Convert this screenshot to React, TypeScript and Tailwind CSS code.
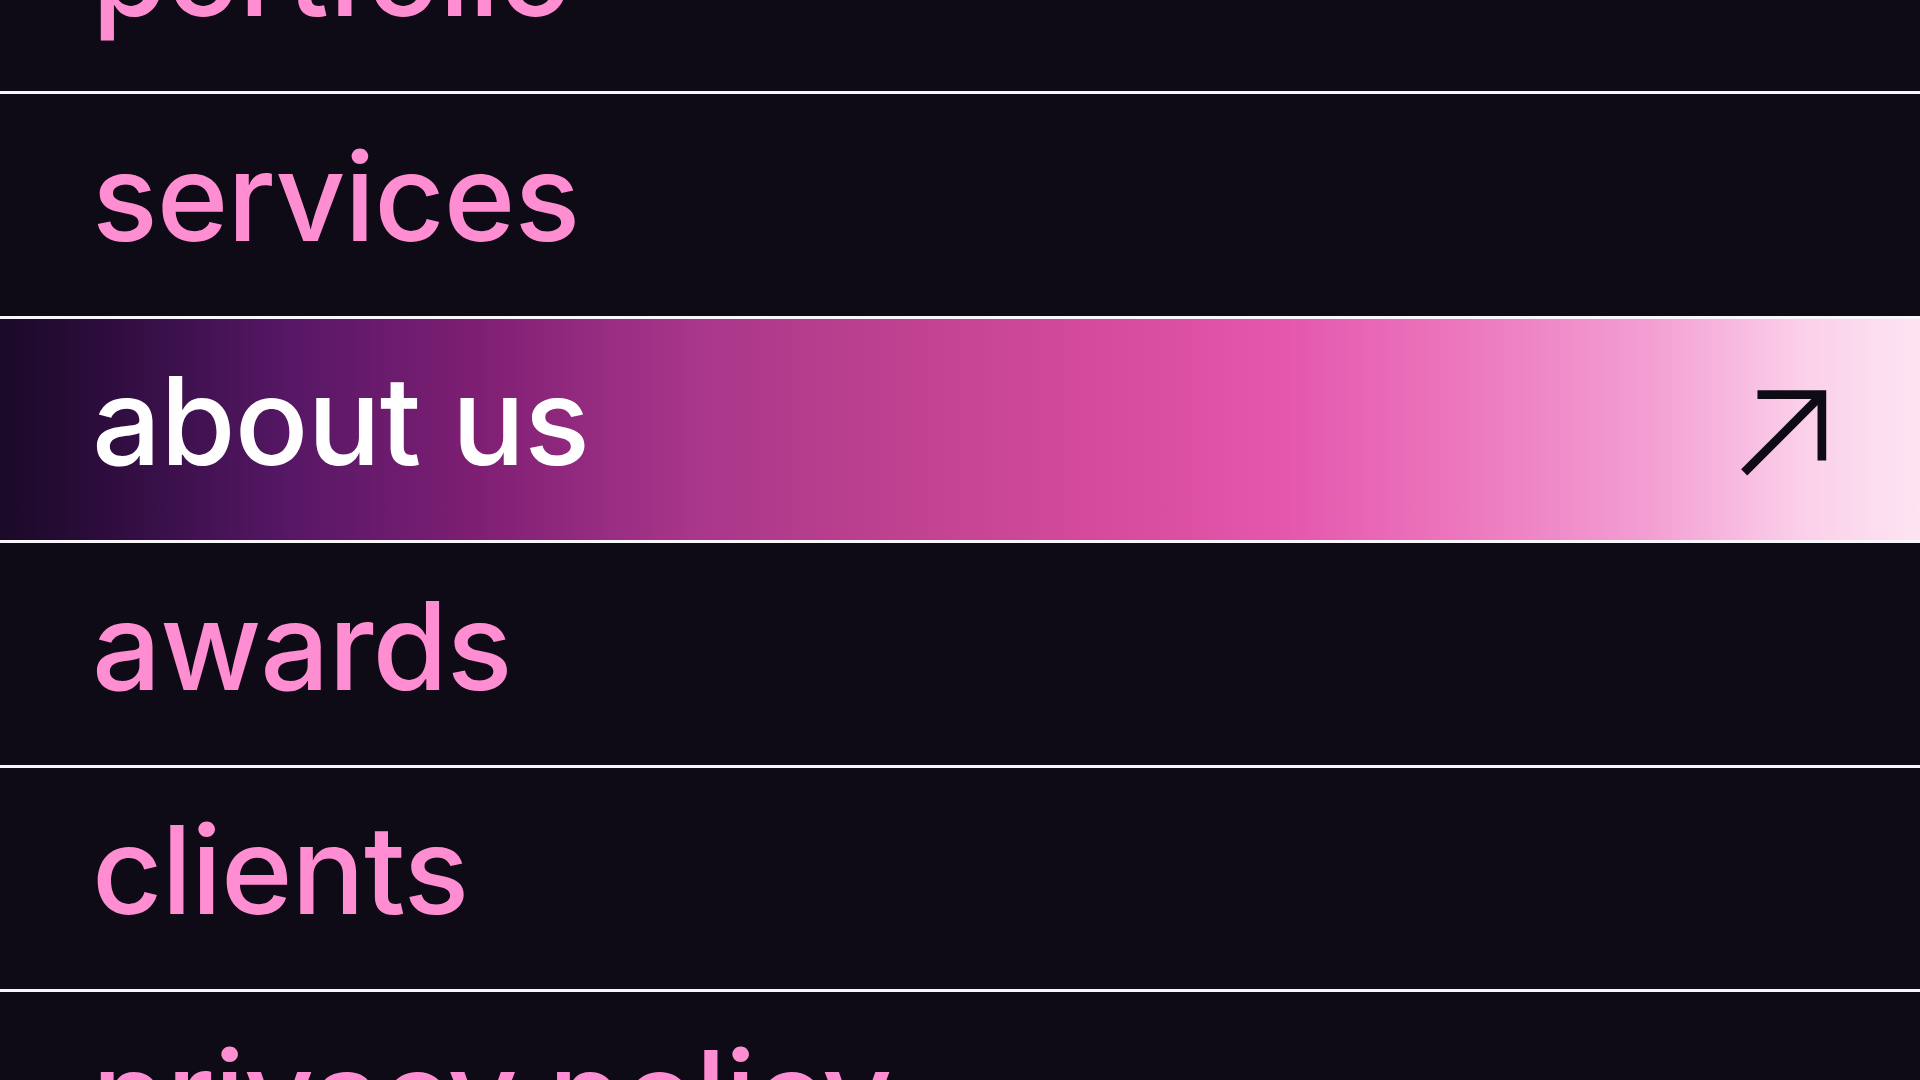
import React from 'react';

const items = [
  { id: 'portfolio', label: 'portfolio' },
  { id: 'services', label: 'services' },
  { id: 'about', label: 'about us', active: true },
  { id: 'awards', label: 'awards' },
  { id: 'clients', label: 'clients' },
  { id: 'privacy', label: 'privacy policy' },
];

function ArrowUpRight() {
  return (
    <svg width="92" height="92" viewBox="0 0 90 90" fill="none" className="mt-6 flex-shrink-0">
      <path d="M21 7.5H84V72" stroke="#0e0b16" strokeWidth="8.5" strokeLinejoin="miter" />
      <path d="M84 7.5L8 83.5" stroke="#0e0b16" strokeWidth="8.5" />
    </svg>
  );
}

export default function App() {
  return (
    <div className="h-screen w-full overflow-hidden bg-[#0e0b16] font-['Inter','Liberation_Sans',sans-serif]">
      {/* menu list, scrolled so "portfolio" sits mostly above the fold */}
      <ul className="-mt-[130.5px]">
        {items.map((item) => (
          <li
            key={item.id}
            className={`flex h-[224.5px] items-center justify-between border-b-[3px] border-[#f8f6fa] pb-4 pl-[92px] pr-[92px] ${
              item.active
                ? 'bg-[linear-gradient(90deg,#1a0a27_0%,#2b0c3b_5%,#561765_15%,#7f1f74_25%,#a8368a_36%,#bf4290_47%,#d54a9c_57%,#e457ad_67%,#ec76bd_76%,#f39fd3_86%,#fbd0ea_94%,#fde4f2_100%)]'
                : ''
            }`}
          >
            <span
              className={`text-[122px] leading-none font-medium tracking-[-1px] whitespace-nowrap ${
                item.active ? 'text-white' : 'text-[#ff8dd1]'
              }`}
            >
              {item.label}
            </span>
            {item.active && <ArrowUpRight />}
          </li>
        ))}
      </ul>
    </div>
  );
}
